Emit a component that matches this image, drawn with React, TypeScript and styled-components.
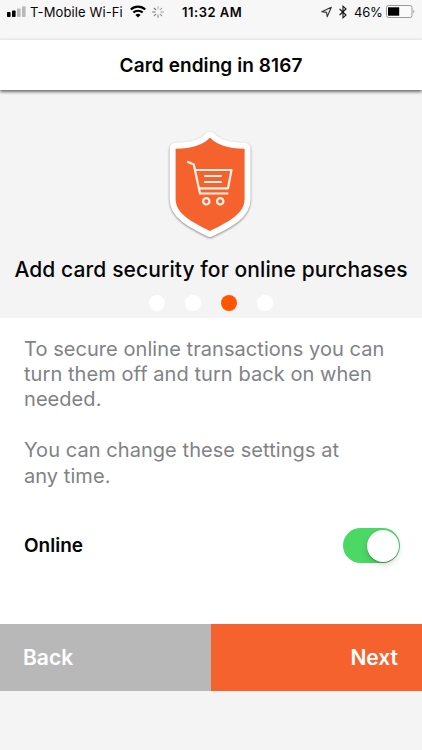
import { useState } from 'react';
import styled, { createGlobalStyle } from 'styled-components';

const GlobalStyle = createGlobalStyle`
  body {
    margin: 0;
    background: #f4f4f4;
    font-family: Inter, "Liberation Sans", sans-serif;
    color: #050505;
  }
`

const Screen = styled.div`
  width: 422px;
  height: 750px;
  overflow: hidden;
  display: flex;
  flex-direction: column;
  background: #f4f4f4;
`

const StatusBar = styled.div`
  box-sizing: border-box;
  flex: none;
  height: 40px;
  padding: 3px 6px 0 7px;
  display: grid;
  grid-template-columns: 175px 1fr 95px;
  align-items: start;
  background: linear-gradient(#f7f7f7 37px, #efefef 39px);
  font-size: 13px;
  line-height: 18px;
`

const StatusGroup = styled.div`
  height: 18px;
  display: flex;
  align-items: center;
  white-space: nowrap;

  svg {
    flex: none;
  }

  svg + svg {
    margin-left: 6px;
  }
`

const Carrier = styled.span`
  margin: 0 7px 0 4px;
  letter-spacing: 0.12px;
`

const Clock = styled.span`
  font-weight: 600;
  letter-spacing: 0.5px;
`

const Percent = styled.span`
  width: 28px;
  margin: 0 4px 0 7px;
  letter-spacing: -0.2px;
`

const Header = styled.header`
  flex: none;
  height: 50px;
  display: flex;
  justify-content: center;
  background: #fff;
  box-shadow: 0 2px 3px rgba(0, 0, 0, 0.55);
  z-index: 1;
`

const Title = styled.h1`
  margin: 0;
  padding-top: 1px;
  font-size: 19px;
  font-weight: 600;
  line-height: 50px;
  letter-spacing: 0.08px;
`

const Hero = styled.section`
  flex: none;
  box-sizing: border-box;
  height: 228px;
  padding-top: 30px;
  display: flex;
  flex-direction: column;
  align-items: center;

  svg {
    margin-right: 2px;
  }
`

const Heading = styled.h2`
  margin: 12px 0 12px;
  font-size: 21px;
  font-weight: 500;
  line-height: 26px;
  letter-spacing: 0.1px;
  white-space: nowrap;
`

const Dots = styled.div`
  display: flex;
  gap: 20px;
`

const Dot = styled.span<{ $active: boolean }>`
  width: 16px;
  height: 16px;
  border-radius: 50%;
  background: ${({ $active }) => ($active ? '#ff5500' : '#fff')};
`

const Content = styled.main`
  flex: none;
  box-sizing: border-box;
  height: 306px;
  padding: 18.6px 22px 0 24px;
  background: #fff;
`

const Text = styled.p`
  margin: 0 0 25.4px;
  color: #818285;
  font-size: 20px;
  line-height: 25.4px;
  letter-spacing: 0.06px;
  white-space: nowrap;
`

const SettingRow = styled.div`
  margin-top: 39.4px;
  display: flex;
  justify-content: space-between;
  align-items: center;
  font-size: 19px;
  font-weight: 600;
`

const Toggle = styled.button<{ $on: boolean }>`
  width: 57px;
  height: 35px;
  padding: 0 1px;
  display: flex;
  align-items: center;
  justify-content: ${({ $on }) => ($on ? 'flex-end' : 'flex-start')};
  border: 0;
  border-radius: 18px;
  background: ${({ $on }) => ($on ? '#4cd864' : '#e5e5e5')};
`

const Knob = styled.span`
  width: 32px;
  height: 32px;
  border-radius: 50%;
  background: #fff;
  box-shadow: 0 1px 1px rgba(0, 0, 0, 0.25), 0 3px 6px rgba(0, 0, 0, 0.15);
`

const Actions = styled.footer`
  flex: none;
  height: 67px;
  display: flex;
`

const ActionButton = styled.button<{ $primary?: boolean }>`
  flex: 1;
  padding: 0 24px 0 23px;
  border: 0;
  background: ${({ $primary }) => ($primary ? '#f5622d' : '#b8b8b8')};
  color: #fff;
  font-family: inherit;
  font-size: 21px;
  font-weight: 600;
  text-align: ${({ $primary }) => ($primary ? 'right' : 'left')};
`

const SignalIcon = () => (
  <svg width="19" height="18" viewBox="0 0 19 18">
    <rect x="0" y="9" width="3.6" height="5" rx="0.8" fill="#000" />
    <rect x="5" y="7.5" width="3.6" height="6.5" rx="0.8" fill="#000" />
    <rect x="10" y="5.5" width="3.6" height="8.5" rx="0.8" fill="#b9b9b9" />
    <rect x="15" y="3.2" width="3.6" height="10.8" rx="0.8" fill="#b9b9b9" />
  </svg>
)

const WifiIcon = () => (
  <svg width="16" height="18" viewBox="0 0 16 18" fill="none" stroke="#000" strokeWidth="2.1">
    <path d="M0.8 6.6a10.3 10.3 0 0 1 14.4 0" />
    <path d="M3.3 9.6a6.8 6.8 0 0 1 9.4 0" />
    <path d="M5.4 11.9a3.8 3.8 0 0 1 5.2 0L8 14.5z" fill="#000" stroke="none" />
  </svg>
)

const SpinnerIcon = () => (
  <svg width="12" height="18" viewBox="-6 -9 12 18" stroke="#555" strokeWidth="1">
    {Array.from({ length: 8 }, (_, i) => (
      <path key={i} d="M0 -2.6V-5.9" transform={`rotate(${i * 45})`} opacity={0.45 + i * 0.06} />
    ))}
  </svg>
)

const LocationIcon = () => (
  <svg width="12" height="18" viewBox="0 0 12 18" fill="none" stroke="#333" strokeWidth="1.1">
    <path d="M0.8 8.8L10.3 4.3L6.2 13.8L5.6 9.4Z" strokeLinejoin="round" />
  </svg>
)

const BluetoothIcon = () => (
  <svg width="8" height="18" viewBox="0 0 8 18" fill="none" stroke="#111" strokeWidth="1.1">
    <path d="M0.6 6L7 12L4 14.8V3.2L7 6L0.6 12" />
  </svg>
)

const BatteryIcon = () => (
  <svg width="30" height="18" viewBox="0 0 30 18">
    <rect x="0.5" y="2.5" width="25.5" height="12" rx="2" fill="#fafafa" stroke="#999" />
    <rect x="2" y="4.3" width="11.2" height="8.4" fill="#000" />
    <path d="M27.4 6.8q2 1.7 0 3.6z" fill="#999" />
  </svg>
)

const ShieldIcon = () => (
  <svg width="120" height="125" viewBox="0 0 120 125" fill="none">
    <path
      d="M60 17.5C66 24.5 78 28.5 94.6 28.8V79C94.6 94 78 102 60 111C42 102 25.6 94 25.6 79V28.8C42 28.5 54 24.5 60 17.5Z"
      fill="#f5622d"
      stroke="#fff"
      strokeWidth="12"
      strokeLinejoin="round"
      paintOrder="stroke"
      filter="drop-shadow(0 1.5px 1px rgba(0, 0, 0, 0.45))"
    />
    <g stroke="#fff1e6" strokeWidth="2.2" strokeLinecap="round" strokeLinejoin="round">
      <path d="M38 42L43.8 44.5L50 73.5H77.5" />
      <path d="M45.5 50H81.5L78 68.3H49" />
      <path d="M55 56H71M55 62H71" />
      <circle cx="56.3" cy="81.3" r="3.2" />
      <circle cx="70.2" cy="81.3" r="3.2" />
    </g>
  </svg>
)

const App = () => {
  const [online, setOnline] = useState(true);

  return (
    <Screen>
      <GlobalStyle />
      <StatusBar>
        <StatusGroup>
          <SignalIcon />
          <Carrier>T-Mobile Wi-Fi</Carrier>
          <WifiIcon />
          <SpinnerIcon />
        </StatusGroup>
        <StatusGroup>
          <Clock>11:32 AM</Clock>
        </StatusGroup>
        <StatusGroup>
          <LocationIcon />
          <BluetoothIcon />
          <Percent>46%</Percent>
          <BatteryIcon />
        </StatusGroup>
      </StatusBar>
      <Header>
        <Title>Card ending in 8167</Title>
      </Header>
      <Hero>
        <ShieldIcon />
        <Heading>Add card security for online purchases</Heading>
        <Dots>
          {[0, 1, 2, 3].map((step) => <Dot key={step} $active={step === 2} />)}
        </Dots>
      </Hero>
      <Content>
        <Text>To secure online transactions you can<br />turn them off and turn back on when<br />needed.</Text>
        <Text>You can change these settings at<br />any time.</Text>
        <SettingRow>
          <span>Online</span>
          <Toggle $on={online} aria-label="Online" onClick={() => setOnline(!online)}>
            <Knob />
          </Toggle>
        </SettingRow>
      </Content>
      <Actions>
        <ActionButton>Back</ActionButton>
        <ActionButton $primary>Next</ActionButton>
      </Actions>
    </Screen>
  )
}

export default App;
